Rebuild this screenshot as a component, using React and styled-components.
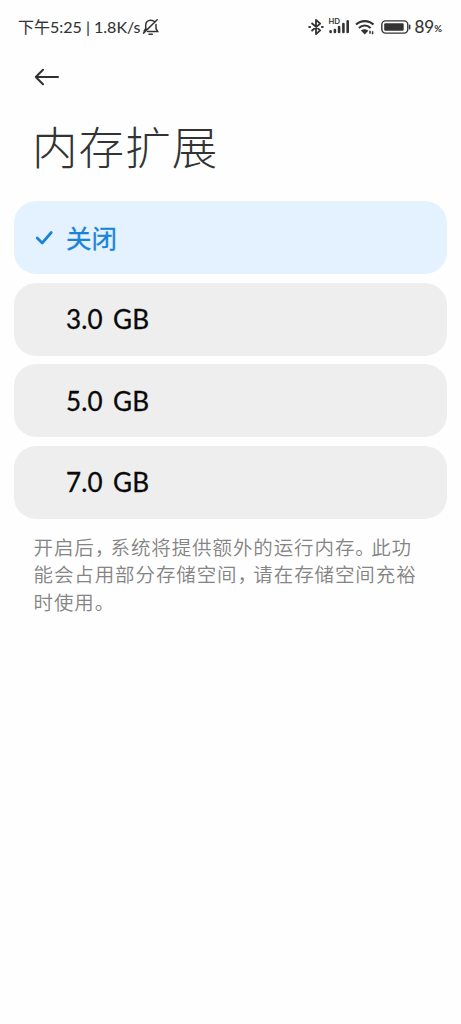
import React from 'react';
import styled, { createGlobalStyle } from 'styled-components';

const Global = createGlobalStyle`
  * { box-sizing: border-box; }
  body { margin: 0; background: #fefefe; }
  svg { display: block; flex: none; }
`;

const Screen = styled.main`
  width: 461px;
  height: 1024px;
  overflow: hidden;
  background: #fefefe;
  font-family: Lato, 'Noto Sans CJK SC', sans-serif;
  color: #333;
`;

const StatusBar = styled.header`
  display: flex;
  justify-content: space-between;
  height: 54px;
  padding: 0 19px 0 18px;
`;

const StatusGroup = styled.div`
  display: flex;
  align-items: center;
  height: 54px;
`;

const StatusText = styled.span`
  font-size: ${(p) => p.$size}px;
  line-height: 24px;
  white-space: pre;
  -webkit-text-stroke: 0.1px currentColor;
`;

const Percent = styled.span`
  font-size: 9.5px;
  font-weight: 700;
  line-height: 24px;
  padding-top: 4px;
`;

const Slot = styled.span`
  margin-left: ${(p) => p.$gap}px;
`;

const NavBar = styled.nav`
  display: flex;
  align-items: center;
  height: 46px;
  padding-left: 34px;
`;

const BackButton = styled.button`
  display: flex;
  padding: 0;
  border: 0;
  background: none;
`;

const Title = styled.h1`
  margin: 10px 0 0;
  padding-left: 32px;
  height: 91px;
  font: 300 45.5px/70px 'Noto Sans CJK SC', sans-serif;
  letter-spacing: 1.1px;
`;

const Options = styled.ul`
  display: flex;
  flex-direction: column;
  gap: 8.5px;
  margin: 0;
  padding: 0 14px;
  list-style: none;
`;

const Option = styled.li`
  display: flex;
  align-items: center;
  height: 73px;
  padding: 0 0 ${(p) => (p.$selected ? '2px' : '0')} 20px;
  border-radius: 22px;
  background: ${(p) => (p.$selected ? '#e4f1ff' : '#eee')};
  color: ${(p) => (p.$selected ? '#1783d9' : '#090909')};
  font-size: ${(p) => (p.$selected ? '25.5px' : '26px')};
  font-weight: 400;
  word-spacing: 3.5px;
  letter-spacing: ${(p) => (p.$selected ? '0' : '0.15px')};
  -webkit-text-stroke: 0.3px currentColor;
`;

const CheckSlot = styled.span`
  display: flex;
  width: 32px;
`;

const Note = styled.p`
  margin: 14.5px 0 0;
  padding-left: 33.5px;
  font: 400 19.5px/27.3px 'Noto Sans CJK SC', sans-serif;
  font-weight: 350;
  letter-spacing: 0.9px;
  color: #848484;
  white-space: nowrap;
`;

const Punct = styled.span`
  letter-spacing: -3.7px;
`;

const MutedBell = () => (
  <svg width="18" height="18" viewBox="0 0 18 18" fill="none" stroke="#333" strokeWidth="1.5" strokeLinecap="round">
    <path d="M3.7 11.2V7.3C3.7 4.3 5.8 2.2 8.7 2.2c1.5 0 2.8.5 3.6 1.4M14 6.4v4.3l1.7 2.7H5.7M1.5 15.1 15.2 1.7M7 16.2h3.3" />
    <path d="m3.7 10.7-1.6 2.5" />
  </svg>
);

const Bluetooth = () => (
  <svg width="16" height="18" viewBox="0 0 16 18" fill="none" stroke="#333" strokeWidth="1.8">
    <path d="m3.5 5 8.7 7.4L8 16.2V1.8l4.2 3.8L3.5 13" strokeLinejoin="round" />
    <path d="M.5 9h2.3M13.2 9h2.3" strokeWidth="2.2" />
  </svg>
);

const SignalWrap = styled.span`
  position: relative;
  display: block;
  width: 22px;
  height: 18px;
`;

const HdLabel = styled.span`
  position: absolute;
  left: 0;
  top: 0;
  font: 700 7.5px/7px Lato, sans-serif;
`;

const Signal = () => (
  <SignalWrap>
    <HdLabel>HD</HdLabel>
    <svg width="22" height="18" viewBox="0 0 22 18" stroke="#333" strokeWidth="2.6" strokeLinecap="round">
      <path d="M2.6 13.4v.6M6.9 12v2M11.1 9v5M15.4 6v8M19.7 3.2V14" />
    </svg>
  </SignalWrap>
);

const Wifi = () => (
  <svg width="20" height="18" viewBox="0 0 20 18" fill="none" stroke="#333" strokeWidth="2.1">
    <path d="M1 6.6c5-4.7 12.5-4.7 17.5 0M3.9 9.9c3.4-3.2 8.3-3.2 11.7 0" />
    <path d="m5.9 12.5 3.9 3.9 3.5-3.6c-2.1-2-5.3-2-7.4-.3Z" fill="#333" stroke="none" />
    <path d="M15 12.8v3M17.6 13.3v3" strokeWidth="1.5" />
  </svg>
);

const Battery = () => (
  <svg width="30" height="14" viewBox="0 0 30 14" fill="none" stroke="#333">
    <rect x=".8" y=".9" width="26" height="12.2" rx="3.8" strokeWidth="1.4" />
    <rect x="3.2" y="3.2" width="19.5" height="7.6" rx="1.2" fill="#333" stroke="none" />
    <path d="M28.7 5.2v3.6" strokeWidth="1.4" strokeLinecap="round" />
  </svg>
);

const Arrow = () => (
  <svg width="26" height="18" viewBox="0 0 26 18" fill="none" stroke="#303030" strokeWidth="2" strokeLinecap="round" strokeLinejoin="round">
    <path d="M24 9H1.8M9 1.8 1.8 9 9 16.2" />
  </svg>
);

const Check = () => (
  <svg width="20" height="16" viewBox="0 0 20 16" fill="none" stroke="#1783d9" strokeWidth="2.7" strokeLinecap="round" strokeLinejoin="round">
    <path d="m3.2 9 5 5L17.3 3.5" />
  </svg>
);

const options = ['关闭', '3.0 GB', '5.0 GB', '7.0 GB'];

export default function App() {
  return (
    <Screen>
      <Global />
      <StatusBar>
        <StatusGroup>
          <StatusText $size={16}>下午5:25 | 1.8K/s</StatusText>
          <Slot $gap={1.5}><MutedBell /></Slot>
        </StatusGroup>
        <StatusGroup>
          <Bluetooth />
          <Slot $gap={4}><Signal /></Slot>
          <Slot $gap={5}><Wifi /></Slot>
          <Slot $gap={6}><Battery /></Slot>
          <Slot $gap={3}><StatusText $size={17}>89</StatusText></Slot>
          <Percent>%</Percent>
        </StatusGroup>
      </StatusBar>
      <NavBar>
        <BackButton aria-label="返回"><Arrow /></BackButton>
      </NavBar>
      <Title>内存扩展</Title>
      <Options>
        {options.map((label, i) => (
          <Option key={label} $selected={i === 0}>
            <CheckSlot>{i === 0 && <Check />}</CheckSlot>
            {label}
          </Option>
        ))}
      </Options>
      <Note>
        开启后<Punct>，</Punct>系统将提供额外的运行内存<Punct>。</Punct>此功<br />
        能会占用部分存储空间<Punct>，</Punct>请在存储空间充裕<br />
        时使用。
      </Note>
    </Screen>
  );
}
